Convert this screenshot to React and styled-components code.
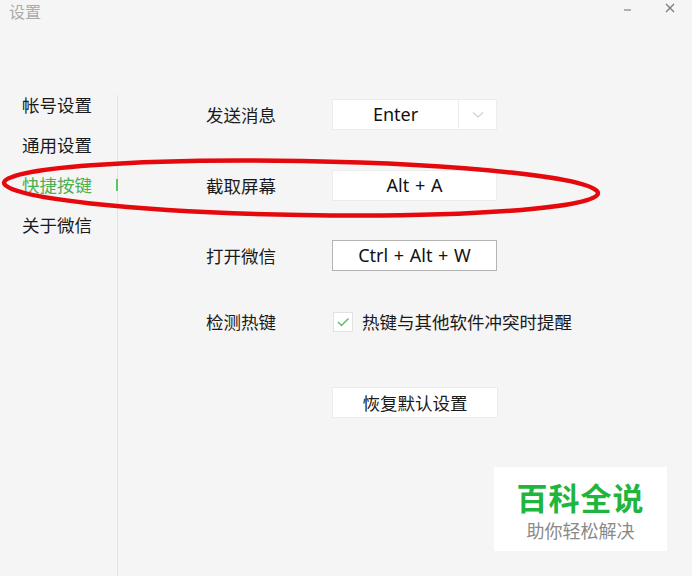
import React from "react";
import styled, { createGlobalStyle } from "styled-components";

const GlobalStyle = createGlobalStyle`
  html, body {
    margin: 0;
    padding: 0;
    background: #f5f5f5;
  }
  body {
    font-family: "Noto Sans", "Noto Sans CJK SC", sans-serif;
  }
`;

const Window = styled.div`
  position: relative;
  width: 692px;
  height: 576px;
  background: #f5f5f5;
  display: flex;
  flex-direction: column;
  overflow: hidden;
`;

const TitleBar = styled.div`
  height: 85px;
  display: flex;
  justify-content: space-between;
  align-items: flex-start;
  flex-shrink: 0;
`;

const Title = styled.span`
  font-family: "Noto Sans CJK SC", sans-serif;
  font-size: 16px;
  line-height: 22px;
  color: #ababab;
  padding: 0 0 0 9px;
`;

const Controls = styled.div`
  display: flex;
  gap: 30px;
  padding: 0 16px 0 0;
`;

const ControlBtn = styled.span`
  width: 12px;
  height: 16px;
  display: flex;
  align-items: center;
  justify-content: center;
`;

const Body = styled.div`
  flex: 1;
  display: flex;
`;

const Sidebar = styled.nav`
  width: 117px;
  display: flex;
  flex-direction: column;
`;

const NavItem = styled.div`
  position: relative;
  height: 40px;
  line-height: 40px;
  padding-left: 22px;
  font-family: "Noto Sans CJK SC", sans-serif;
  font-size: 17.5px;
  color: ${(p) => (p.$active ? "#4caf50" : "#1a1a1a")};

  &::after {
    content: "";
    display: ${(p) => (p.$active ? "block" : "none")};
    position: absolute;
    right: -1px;
    top: 14px;
    width: 2px;
    height: 12px;
    background: #5cc461;
  }
`;

const Divider = styled.div`
  width: 1px;
  margin-top: 10px;
  background: #e3e3e3;
`;

const Content = styled.div`
  flex: 1;
  padding: 14px 0 0 88px;
  display: flex;
  flex-direction: column;
`;

const Row = styled.div`
  display: grid;
  grid-template-columns: 126px 166px;
  align-items: center;
  height: 31px;
  margin-top: ${(p) => p.$mt || 0}px;
`;

const Label = styled.span`
  font-family: "Noto Sans CJK SC", sans-serif;
  font-size: 17.5px;
  color: #1a1a1a;
`;

const KeyBox = styled.div`
  box-sizing: border-box;
  height: 31px;
  width: 165px;
  background: #fff;
  border: 1px solid ${(p) => (p.$focused ? "#b4b4b4" : "#ececec")};
  display: flex;
  align-items: stretch;
  font-size: 18px;
  color: #111;
`;

const KeyText = styled.span`
  flex: 1;
  display: flex;
  align-items: center;
  justify-content: center;
  padding-bottom: 1px;
  white-space: pre;
  word-spacing: 1px;
`;

const DropPart = styled.span`
  width: 37px;
  border-left: 1px solid #ececec;
  display: flex;
  align-items: center;
  justify-content: center;
`;

const CheckRow = styled.label`
  display: flex;
  align-items: center;
  gap: 9px;
  margin-left: 1px;
  white-space: nowrap;
`;

const CheckBox = styled.span`
  box-sizing: border-box;
  flex-shrink: 0;
  width: 20px;
  height: 20px;
  background: #fff;
  border: 1px solid #e2e2e2;
  display: flex;
  align-items: center;
  justify-content: center;
`;

const Button = styled.button`
  box-sizing: border-box;
  height: 31px;
  width: 166px;
  background: #fff;
  border: 1px solid #ececec;
  font-family: "Noto Sans CJK SC", sans-serif;
  font-size: 17.5px;
  color: #1a1a1a;
  padding: 0 0 1px;
`;

const Watermark = styled.div`
  position: absolute;
  left: 494px;
  top: 467px;
  width: 173px;
  height: 84px;
  background: #fff;
  display: flex;
  flex-direction: column;
  align-items: center;
  justify-content: center;
  font-family: "Noto Sans CJK SC", sans-serif;
`;

const WmTitle = styled.span`
  font-size: 31px;
  font-weight: 700;
  color: #1fb53f;
  line-height: 42px;
  letter-spacing: 1px;
`;

const WmSub = styled.span`
  font-size: 18px;
  color: #8a8a8a;
  line-height: 24px;
`;

const Annotation = styled.svg`
  position: absolute;
  left: 0;
  top: 0;
  pointer-events: none;
`;

const navItems = ["帐号设置", "通用设置", "快捷按键", "关于微信"];

export default function App() {
  return (
    <>
      <GlobalStyle />
      <Window>
        <TitleBar>
          <Title>设置</Title>
          <Controls>
            <ControlBtn>
              <svg width="10" height="10" viewBox="0 0 10 10">
                <line x1="1" y1="7" x2="8" y2="7" stroke="#8a8a8a" strokeWidth="1.3" />
              </svg>
            </ControlBtn>
            <ControlBtn>
              <svg width="10" height="10" viewBox="0 0 10 10">
                <path d="M1 1 L9 9 M9 1 L1 9" stroke="#7a7a7a" strokeWidth="1.3" fill="none" />
              </svg>
            </ControlBtn>
          </Controls>
        </TitleBar>
        <Body>
          <Sidebar>
            {navItems.map((n) => (
              <NavItem key={n} $active={n === "快捷按键"}>
                {n}
              </NavItem>
            ))}
          </Sidebar>
          <Divider />
          <Content>
            <Row>
              <Label>发送消息</Label>
              <KeyBox>
                <KeyText>Enter</KeyText>
                <DropPart>
                  <svg width="12" height="8" viewBox="0 0 12 8">
                    <path d="M1 1.5 L6 6 L11 1.5" stroke="#cfcfcf" strokeWidth="1.1" fill="none" />
                  </svg>
                </DropPart>
              </KeyBox>
            </Row>
            <Row $mt={40}>
              <Label>截取屏幕</Label>
              <KeyBox>
                <KeyText>Alt + A</KeyText>
              </KeyBox>
            </Row>
            <Row $mt={39}>
              <Label>打开微信</Label>
              <KeyBox $focused>
                <KeyText>Ctrl + Alt + W</KeyText>
              </KeyBox>
            </Row>
            <Row $mt={35}>
              <Label>检测热键</Label>
              <CheckRow>
                <CheckBox>
                  <svg width="14" height="12" viewBox="0 0 14 12">
                    <path d="M2 6 L5.5 9.5 L12.5 2.5" stroke="#5bb966" strokeWidth="1.4" fill="none" />
                  </svg>
                </CheckBox>
                <Label>热键与其他软件冲突时提醒</Label>
              </CheckRow>
            </Row>
            <Row $mt={50}>
              <span />
              <Button>恢复默认设置</Button>
            </Row>
          </Content>
        </Body>
        <Watermark>
          <WmTitle>百科全说</WmTitle>
          <WmSub>助你轻松解决</WmSub>
        </Watermark>
        <Annotation width="692" height="576" viewBox="0 0 692 576">
          <ellipse
            cx="301"
            cy="188"
            rx="297"
            ry="27"
            transform="rotate(1 301 188)"
            fill="none"
            stroke="#e5080c"
            strokeWidth="4.5"
          />
        </Annotation>
      </Window>
    </>
  );
}
